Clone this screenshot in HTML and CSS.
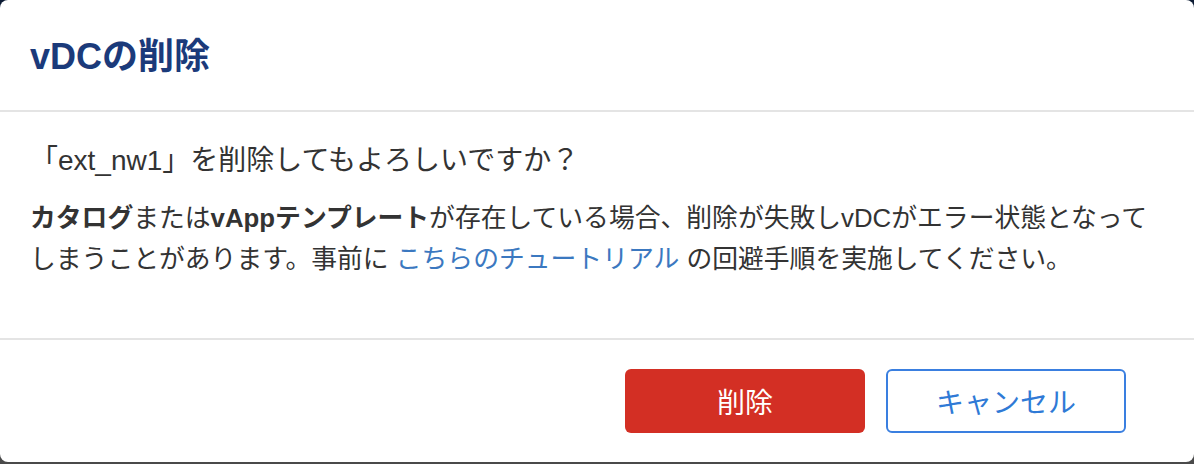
FILE: index.html
```html
<!DOCTYPE html>
<html lang="ja">
<head>
    <meta charset="UTF-8">
    <meta name="viewport" content="width=device-width, initial-scale=1.0">
    <title>vDCの削除</title>
    <link rel="stylesheet" href="styles.css">
</head>
<body>
    <div class="modal">
        <div class="modal-header">
            <h2>vDCの削除</h2>
        </div>
        <div class="modal-body">
            <p class="question">「ext_nw1」を削除してもよろしいですか？</p>
            <p class="note"><b>カタログ</b>または<b>vAppテンプレート</b>が存在している場合、削除が失敗しvDCがエラー状態となってしまうことがあります。事前に <a href="#">こちらのチュートリアル</a> の回避手順を実施してください。</p>
        </div>
        <div class="modal-footer">
            <button type="button" class="btn btn-danger">削除</button>
            <button type="button" class="btn btn-outline">キャンセル</button>
        </div>
    </div>
</body>
</html>
```

FILE: styles.css
```css
body {
    margin: 0;
    height: 100vh;
    background: linear-gradient(#0b1a33, #4a4a4a);
    font-family: "Liberation Sans", "Noto Sans CJK JP", sans-serif;
    color: #333;
}
.modal {
    background: white;
    height: 462px;
    border-radius: 8px;
    display: flex;
    flex-direction: column;
    overflow: hidden;
}
.modal-header {
    height: 106px;
    padding: 0 30px 4px;
    display: flex;
    align-items: center;
    border-bottom: 2px solid #e4e4e4;
}
h2 {
    margin: 0;
    font-size: 36px;
    font-weight: bold;
    color: #1b3a7a;
}
.modal-body {
    height: 226px;
    padding: 0 40px 0 30px;
    border-bottom: 2px solid #e4e4e4;
}
.modal-body p {
    margin: 0;
}
.question {
    padding-top: 28px;
    margin-bottom: 17px !important;
    font-size: 28px;
    line-height: 41px;
}
.note {
    font-size: 25.8px;
    line-height: 41px;
}
.note b {
    font-weight: bold;
}
.note a {
    color: #3b78c0;
    text-decoration: none;
}
.modal-footer {
    flex: 1;
    display: flex;
    justify-content: flex-end;
    align-items: center;
    gap: 21px;
    padding: 0 68px 0 30px;
}
.btn {
    width: 240px;
    height: 64px;
    border-radius: 6px;
    font-family: inherit;
    font-size: 28px;
    cursor: pointer;
}
.btn-danger {
    background-color: #d32f24;
    border: none;
    color: white;
}
.btn-outline {
    background-color: white;
    border: 2px solid #3a7fe0;
    color: #2f7ad6;
}
```
